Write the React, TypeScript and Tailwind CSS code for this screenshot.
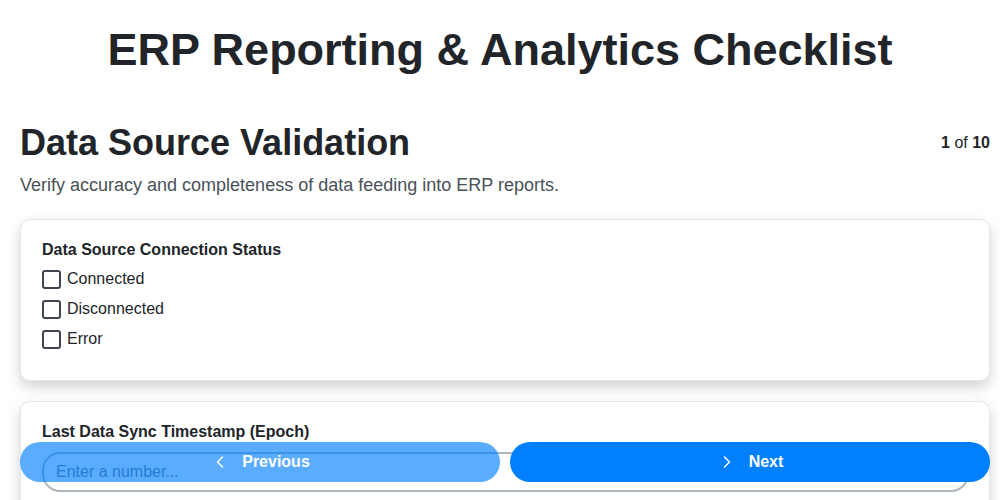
import { ChevronLeft, ChevronRight } from 'lucide-react';

const options = ['Connected', 'Disconnected', 'Error'];

export default function App() {
  return (
    <div className="min-h-screen bg-white pl-5 pr-[10px] pb-24 text-[#212529] font-['Liberation_Sans',Arial,sans-serif]">
      <h1 className="pt-[26px] pr-[10px] text-center text-[45px] font-bold leading-[48px]">
        ERP Reporting &amp; Analytics Checklist
      </h1>

      <div className="mt-[47px] flex items-center justify-between">
        <h2 className="text-[36px] font-bold leading-[43px]">Data Source Validation</h2>
        <div className="text-base">
          <span className="font-bold">1</span> of <span className="font-bold">10</span>
        </div>
      </div>
      <p className="mt-2 text-lg leading-[27px] text-[#495057]">
        Verify accuracy and completeness of data feeding into ERP reports.
      </p>

      {/* connection status */}
      <div className="mt-5 rounded-[10px] border border-[#e5e7eb] bg-white pl-[21px] pr-5 pt-[18px] pb-[26px] shadow-[0_6px_14px_rgba(0,0,0,0.18)]">
        <div className="text-base font-bold leading-6">Data Source Connection Status</div>
        <div className="mt-0.5 flex flex-col">
          {options.map((o) => (
            <label key={o} className="flex h-[30px] items-center gap-[6px] text-base">
              <span className="h-[19px] w-[19px] rounded-[3px] border-2 border-[#3f4451] bg-white" />
              {o}
            </label>
          ))}
        </div>
      </div>

      {/* timestamp */}
      <div className="mt-5 rounded-[10px] border border-[#e5e7eb] bg-white pl-[21px] pr-5 pt-[18px] pb-5 shadow-[0_6px_14px_rgba(0,0,0,0.18)]">
        <div className="text-base font-bold leading-6">Last Data Sync Timestamp (Epoch)</div>
        <input
          type="text"
          placeholder="Enter a number..."
          className="mt-2 h-10 w-full rounded-[18px] border-2 border-[#adb5bd] px-3 text-base placeholder:text-[#6c757d] outline-none"
        />
      </div>

      <div className="fixed bottom-[18px] left-5 right-[10px] flex gap-[10px]">
        <button className="flex h-10 flex-1 items-center justify-center gap-3 rounded-full bg-[#0080ff] text-base font-bold text-white opacity-65">
          <ChevronLeft size={20} strokeWidth={1.75} />
          Previous
        </button>
        <button className="flex h-10 flex-1 items-center justify-center gap-3 rounded-full bg-[#0080ff] text-base font-bold text-white">
          <ChevronRight size={20} strokeWidth={1.75} />
          Next
        </button>
      </div>
    </div>
  );
}
